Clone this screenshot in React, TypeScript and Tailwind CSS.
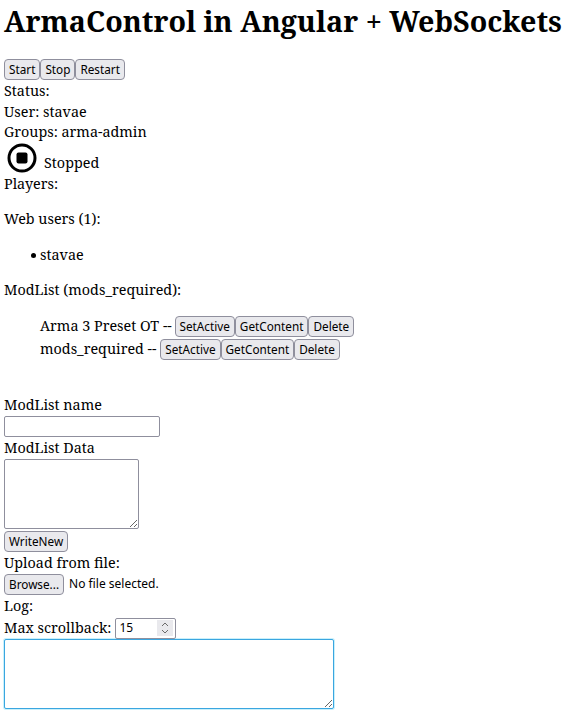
const btn = "h-[21px] px-[4px] border border-[#8f8f9d] rounded-[4px] bg-[#e9e9ed] text-[11.75px] leading-[19px] text-black align-baseline [font-family:'Noto_Sans',sans-serif]";

function Btn({ children }: { children: string }) {
  return <button className={btn}>{children}</button>;
}

export default function App() {
  return (
    <div className="px-[4px] pt-[1px] text-[14.35px] leading-[20.5px] text-black bg-white min-h-[723px] [font-family:'Noto_Serif','DejaVu_Serif',serif]">
      <h1 className="text-[28.65px] leading-[40px] font-bold mb-[18px] whitespace-nowrap">ArmaControl in Angular + WebSockets</h1>
      <div className="flex h-[21px]"><Btn>Start</Btn><Btn>Stop</Btn><Btn>Restart</Btn></div>
      <div className="pt-[1px]">Status:</div>
      <div>User: stavae</div>
      <div>Groups: arma-admin</div>
      <div className="flex items-end h-[31px]">
        <svg width="32" height="32" viewBox="0 0 32 32" className="mr-[6px] ml-[2px]" fill="none">
          <circle cx="16" cy="16" r="13" stroke="black" strokeWidth="3" />
          <rect x="10.5" y="10.5" width="11" height="11" rx="2" fill="black" />
        </svg>
        <span>Stopped</span>
      </div>
      <div>Players:</div>
      <p className="mt-[15px]">Web users (1):</p>
      <ul className="list-none pl-[36px] my-[15px]"><li className="relative"><span className="absolute left-[-9px] top-[8px] w-[5px] h-[5px] rounded-full bg-black" />stavae</li></ul>
      <p>ModList (mods_required):</p>
      <div className="pl-[36px] mt-[15px] mb-[34px]">
        <div className="h-[23px]">Arma 3 Preset OT <span className="mr-[-1px]">--</span> <Btn>SetActive</Btn><Btn>GetContent</Btn><Btn>Delete</Btn></div>
        <div className="h-[22px]">mods_required -- <Btn>SetActive</Btn><Btn>GetContent</Btn><Btn>Delete</Btn></div>
      </div>
      <div>ModList name</div>
      <input className="block mt-[1px] w-[156px] h-[21px] border border-[#8f8f9d] rounded-[2px] bg-white" />
      <div className="pt-[1px]">ModList Data</div>
      <textarea className="block w-[135px] h-[70px] border border-[#8f8f9d] rounded-[2px] bg-white" />
      <div className="h-[22px] mt-[2px]"><Btn>WriteNew</Btn></div>
      <div>Upload from file:</div>
      <div className="h-[21px] mt-[1px] flex items-center text-[12px] [font-family:'Noto_Sans',sans-serif]"><Btn>Browse...</Btn><span className="ml-[5px]">No file selected.</span></div>
      <div className="pt-[1px]">Log:</div>
      <div className="h-[21px] mt-[1px] flex items-center">
        <span>Max scrollback:</span>
        <div className="ml-[4px] w-[61px] h-[21px] border border-[#8f8f9d] rounded-[2px] flex items-center justify-between pl-[3px] text-[12px] [font-family:'Noto_Sans',sans-serif]">
          <span>15</span>
          <span className="w-[16px] h-[16px] mr-[2px] bg-[#e9e9ed] flex items-center justify-center">
            <svg width="8" height="14" viewBox="0 0 8 14" fill="none" stroke="#6b6b6b"><path d="M1 5 L4 2 L7 5" /><path d="M1 9 L4 12 L7 9" /></svg>
          </span>
        </div>
      </div>
      <textarea className="block w-[330px] h-[70px] border border-[#3aa6e0] rounded-[2px] bg-white shadow-[0_0_0_1px_#c9f0fb] outline-none" />
    </div>
  );
}
